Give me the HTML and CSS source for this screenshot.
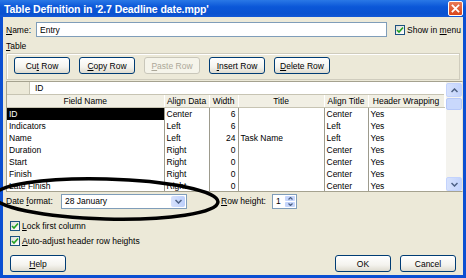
FILE: index.html
```html
<!DOCTYPE html>
<html lang="en">
<head>
    <meta charset="UTF-8">
    <title>Table Definition</title>
    <link rel="stylesheet" href="styles.css">
</head>
<body>
<div class="dialog">
    <div class="titlebar">
        <span class="title">Table Definition in '2.7 Deadline date.mpp'</span>
        <span class="close">
            <svg width="15" height="15" viewBox="0 0 15 15">
                <path d="M4 4 L11 11 M11 4 L4 11" stroke="#fff" stroke-width="2" stroke-linecap="square"/>
            </svg>
        </span>
    </div>
    <div class="frame">
        <div class="name-row">
            <span class="label"><u>N</u>ame:</span>
            <span class="textbox name-box">Entry</span>
            <span class="check"><span class="box"><svg width="8" height="8" viewBox="0 0 8 8"><path d="M1 4 L3 6 L7 1.5" fill="none" stroke="#21a121" stroke-width="1.6"/></svg></span><span>Show in <u>m</u>enu</span></span>
        </div>
        <div class="section-label"><u>T</u>able</div>
        <div class="toolbar">
            <span class="btn"><span>Cu<u>t</u> Row</span></span>
            <span class="btn"><span><u>C</u>opy Row</span></span>
            <span class="btn disabled"><span><u>P</u>aste Row</span></span>
            <span class="btn"><span><u>I</u>nsert Row</span></span>
            <span class="btn"><span><u>D</u>elete Row</span></span>
        </div>
        <div class="grid">
            <div class="grid-main">
                <div class="edit-bar"><span class="edit-corner"></span><span class="edit-value">ID</span></div>
                <table class="fields">
                    <colgroup>
                        <col class="c-field"><col class="c-align"><col class="c-width">
                        <col class="c-title"><col class="c-atitle"><col class="c-wrap">
                    </colgroup>
                    <tr class="head">
                        <th>Field Name</th><th>Align Data</th><th>Width</th>
                        <th>Title</th><th>Align Title</th><th>Header Wrapping</th>
                    </tr>
                    <tr class="selected">
                        <td>ID</td><td>Center</td><td class="num">6</td><td></td><td>Center</td><td>Yes</td>
                    </tr>
                    <tr>
                        <td>Indicators</td><td>Left</td><td class="num">6</td><td></td><td>Left</td><td>Yes</td>
                    </tr>
                    <tr>
                        <td>Name</td><td>Left</td><td class="num">24</td><td>Task Name</td><td>Left</td><td>Yes</td>
                    </tr>
                    <tr>
                        <td>Duration</td><td>Right</td><td class="num">0</td><td></td><td>Center</td><td>Yes</td>
                    </tr>
                    <tr>
                        <td>Start</td><td>Right</td><td class="num">0</td><td></td><td>Center</td><td>Yes</td>
                    </tr>
                    <tr>
                        <td>Finish</td><td>Right</td><td class="num">0</td><td></td><td>Center</td><td>Yes</td>
                    </tr>
                    <tr>
                        <td>Late Finish</td><td>Right</td><td class="num">0</td><td></td><td>Center</td><td>Yes</td>
                    </tr>
                </table>
            </div>
            <div class="scrollbar">
                <span class="sb-btn"><svg width="7" height="5" viewBox="0 0 7 5"><path d="M0.5 4 L3.5 1 L6.5 4" fill="none" stroke="#4d6185" stroke-width="1.5"/></svg></span>
                <span class="sb-thumb"></span>
                <span class="sb-track"></span>
                <span class="sb-btn"><svg width="7" height="5" viewBox="0 0 7 5"><path d="M0.5 1 L3.5 4 L6.5 1" fill="none" stroke="#4d6185" stroke-width="1.5"/></svg></span>
            </div>
        </div>
        <div class="format-row">
            <span class="label">Date <u>f</u>ormat:</span>
            <span class="textbox select-box">
                <span class="select-value">28 January</span>
                <span class="drop-btn"><svg width="7" height="5" viewBox="0 0 7 5"><path d="M0.5 1 L3.5 4 L6.5 1" fill="none" stroke="#4d6185" stroke-width="1.5"/></svg></span>
            </span>
            <span class="label row-height"><u>R</u>ow height:</span>
            <span class="textbox spin-box">
                <span class="select-value">1</span>
                <span class="spin-btns">
                    <span class="spin-btn"><svg width="5" height="3" viewBox="0 0 5 3"><path d="M0.5 2.5 L2.5 0.5 L4.5 2.5" fill="none" stroke="#4d6185" stroke-width="1.2"/></svg></span>
                    <span class="spin-btn"><svg width="5" height="3" viewBox="0 0 5 3"><path d="M0.5 0.5 L2.5 2.5 L4.5 0.5" fill="none" stroke="#4d6185" stroke-width="1.2"/></svg></span>
                </span>
            </span>
        </div>
        <div class="check-row"><span class="check"><span class="box"><svg width="8" height="8" viewBox="0 0 8 8"><path d="M1 4 L3 6 L7 1.5" fill="none" stroke="#21a121" stroke-width="1.6"/></svg></span><span><u>L</u>ock first column</span></span></div>
        <div class="check-row"><span class="check"><span class="box"><svg width="8" height="8" viewBox="0 0 8 8"><path d="M1 4 L3 6 L7 1.5" fill="none" stroke="#21a121" stroke-width="1.6"/></svg></span><span><u>A</u>uto-adjust header row heights</span></span></div>
        <div class="footer">
            <span class="btn wide"><span><u>H</u>elp</span></span>
            <span class="footer-right">
                <span class="btn wide">OK</span>
                <span class="btn wide">Cancel</span>
            </span>
        </div>
    </div>
    <svg class="marker" width="466" height="278" viewBox="0 0 466 278">
        <ellipse cx="106" cy="199" rx="112" ry="20" transform="rotate(1.5 106 199)" fill="none" stroke="#000" stroke-width="3.5"/>
    </svg>
</div>
</body>
</html>
```

FILE: styles.css
```css
html, body {
    margin: 0;
    padding: 0;
}

body {
    font-family: "Liberation Sans", Arial, sans-serif;
    font-size: 8.5px;
    color: #000;
}

u {
    text-decoration: underline;
}

.dialog {
    position: relative;
    width: 466px;
    height: 278px;
    overflow: hidden;
    display: flex;
    flex-direction: column;
}

.titlebar {
    height: 17px;
    display: flex;
    align-items: center;
    justify-content: space-between;
    padding: 0 3px 0 4px;
    background: linear-gradient(#2a78e6, #0b57d8 40%, #0a52d0 80%, #1258d6);
}

.title {
    color: #fff;
    font-weight: bold;
    font-size: 10.5px;
    letter-spacing: -0.1px;
}

.close {
    display: flex;
    width: 15px;
    height: 15px;
    margin-top: -1px;
    border: 1px solid #fff;
    border-radius: 2px;
    box-sizing: border-box;
    align-items: center;
    justify-content: center;
    background: linear-gradient(#e87a57, #d9451b);
}

.close svg {
    width: 13px;
    height: 13px;
}

.frame {
    flex: 1;
    display: flex;
    flex-direction: column;
    background-color: #ece9d8;
    border: 3px solid #0b4fd2;
    border-top: none;
    padding: 5px 0 3px 3px;
}

.name-row {
    display: flex;
    align-items: center;
    height: 15px;
}

.label {
    white-space: nowrap;
}

.name-row .label {
    width: 30px;
}

.textbox {
    display: flex;
    align-items: center;
    box-sizing: border-box;
    background: #fff;
    border: 1px solid #7f9db9;
    height: 15px;
    padding-left: 3px;
}

.name-box {
    width: 351px;
}

.check {
    display: flex;
    align-items: center;
    white-space: nowrap;
}

.name-row .check {
    margin-left: 8px;
}

.box {
    display: flex;
    align-items: center;
    justify-content: center;
    width: 10px;
    height: 10px;
    box-sizing: border-box;
    border: 1px solid #1c5180;
    background: linear-gradient(135deg, #dcdcd6, #fff);
    margin-right: 2px;
}

.section-label {
    height: 13px;
    margin-top: 2px;
    line-height: 14px;
}

.toolbar {
    display: flex;
    gap: 9px;
    margin: 1px 3px 0 0;
    height: 27px;
    box-sizing: border-box;
    padding: 3px 0 0 7px;
    border: 1px solid #cfccbd;
    box-shadow: inset 1px 1px #fff;
}

.btn {
    display: flex;
    align-items: center;
    justify-content: center;
    width: 56px;
    height: 17px;
    box-sizing: border-box;
    border: 1px solid #003c74;
    border-radius: 3px;
    background: linear-gradient(#fff, #f4f3ee 60%, #dedbcf);
    white-space: nowrap;
}

.btn.disabled {
    color: #aca899;
    border-color: #c9c7ba;
    background: #f5f4ea;
}

.grid {
    display: flex;
    margin: 1px 0 0 0;
    height: 111px;
    box-sizing: border-box;
    border: 1px solid #a5a28f;
    border-right-color: #e6e3d3;
    background: #fff;
    overflow: hidden;
}

.grid-main {
    width: 437px;
}

.edit-bar {
    display: flex;
    height: 12px;
    border-bottom: 1px solid #c7c4b3;
}

.edit-corner {
    width: 22px;
    background: #ece9d8;
    border-right: 1px solid #c7c4b3;
}

.edit-value {
    padding-left: 5px;
    line-height: 12px;
}

.fields {
    border-collapse: collapse;
    table-layout: fixed;
    width: 437px;
}

.c-field { width: 157px; }
.c-align { width: 45px; }
.c-width { width: 29px; }
.c-title { width: 86px; }
.c-atitle { width: 44px; }
.c-wrap { width: 76px; }

.fields th,
.fields td {
    height: 12px;
    padding: 0 2px;
    white-space: nowrap;
    overflow: hidden;
    line-height: 12px;
    border-left: 1px solid #9d9b8d;
}

.fields th:first-child,
.fields td:first-child {
    border-left: none;
}

.fields th {
    font-weight: normal;
    background: #f1efe4;
    border-left-color: #c7c4b3;
    border-bottom: 1px solid #c7c4b3;
    border-right: 1px solid #fff;
}

.fields .num {
    text-align: right;
}

.selected td:first-child {
    background: #000;
    color: #fff;
}

.scrollbar {
    display: flex;
    flex-direction: column;
    width: 16px;
    margin-left: 2px;
    padding-top: 1px;
    background: #f4f3ee;
}

.sb-btn {
    display: flex;
    align-items: center;
    justify-content: center;
    height: 14px;
    box-sizing: border-box;
    border: 1px solid #c3d3fd;
    border-radius: 2px;
    background: linear-gradient(90deg, #d7e2fd, #c2d3fc);
}

.sb-thumb {
    height: 12px;
    margin-top: 1px;
    box-sizing: border-box;
    border: 1px solid #b6c8f8;
    border-radius: 2px;
    background: #c9d8fc;
}

.sb-track {
    flex: 1;
}

.format-row {
    display: flex;
    align-items: center;
    height: 16px;
    margin-top: 1px;
}

.format-row .label {
    width: 55px;
}

.select-box {
    width: 126px;
    justify-content: space-between;
    padding-right: 1px;
}

.drop-btn {
    display: flex;
    align-items: center;
    justify-content: center;
    width: 14px;
    height: 11px;
    border-radius: 2px;
    background: linear-gradient(90deg, #d7e2fd, #bccffb);
}

.format-row .row-height {
    width: 51px;
    margin-left: 34px;
}

.spin-box {
    width: 25px;
    justify-content: space-between;
    padding-right: 1px;
}

.spin-btns {
    display: flex;
    flex-direction: column;
    gap: 1px;
}

.spin-btn {
    display: flex;
    align-items: center;
    justify-content: center;
    width: 10px;
    height: 5px;
    border-radius: 1px;
    background: #c6d6fc;
}

.check-row {
    display: flex;
    align-items: center;
    height: 15px;
    padding-left: 4px;
}

.format-row + .check-row {
    margin-top: 9px;
}

.footer {
    display: flex;
    justify-content: space-between;
    margin-top: 7px;
    padding: 0 7px 0 4px;
}

.footer-right {
    display: flex;
    gap: 9px;
}

.marker {
    position: absolute;
    left: 0;
    top: 0;
    pointer-events: none;
}
```
